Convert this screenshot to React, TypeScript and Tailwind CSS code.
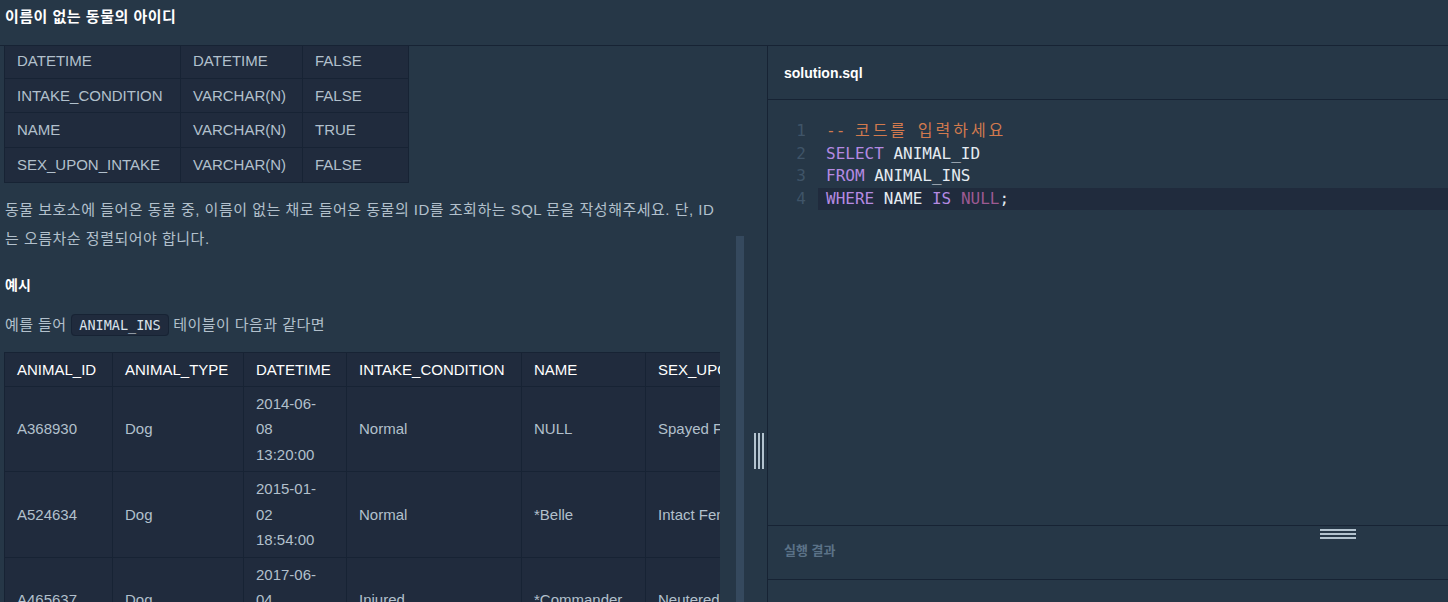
import React from "react";

const sans = "font-['Liberation_Sans','Noto_Sans_CJK_KR',sans-serif]";
const mono = "font-['DejaVu_Sans_Mono','Noto_Sans_CJK_KR',monospace]";

const columnRows = [
  ["DATETIME", "DATETIME", "FALSE"],
  ["INTAKE_CONDITION", "VARCHAR(N)", "FALSE"],
  ["NAME", "VARCHAR(N)", "TRUE"],
  ["SEX_UPON_INTAKE", "VARCHAR(N)", "FALSE"],
];

const exampleHead = ["ANIMAL_ID", "ANIMAL_TYPE", "DATETIME", "INTAKE_CONDITION", "NAME", "SEX_UPON_INTAKE"];
const exampleRows = [
  ["A368930", "Dog", "2014-06-08 13:20:00", "Normal", "NULL", "Spayed Female"],
  ["A524634", "Dog", "2015-01-02 18:54:00", "Normal", "*Belle", "Intact Female"],
  ["A465637", "Dog", "2017-06-04 08:17:00", "Injured", "*Commander", "Neutered Male"],
];
const colWidths = ["w-[108px]", "w-[131px]", "w-[103px]", "w-[175px]", "w-[124px]", "w-[160px]"];

function ProblemPanel() {
  return (
    <div className="w-[736px] shrink-0 overflow-hidden pl-[4px] pr-[16px]">
      {/* column spec table, scrolled slightly */}
      <table className="-mt-[3px] w-[405px] table-fixed border-collapse bg-[#202b3d] text-[15px] text-[#b2c0cc]">
        <tbody>
          {columnRows.map((r) => (
            <tr key={r[0]}>
              <td className="w-[176px] border border-[#172334] px-[12px] py-[5px] leading-[23.7px]">{r[0]}</td>
              <td className="w-[122px] border border-[#172334] px-[12px] py-[5px] leading-[23.7px]">{r[1]}</td>
              <td className="border border-[#172334] px-[12px] py-[5px] leading-[23.7px]">{r[2]}</td>
            </tr>
          ))}
        </tbody>
      </table>

      <p className="mt-[12px] pl-px text-[15px] leading-[29px] tracking-[0.5px] text-[#b2c0cc]">
        동물 보호소에 들어온 동물 중, 이름이 없는 채로 들어온 동물의 ID를 조회하는 SQL 문을 작성해주세요. 단, ID는 오름차순 정렬되어야 합니다.
      </p>

      <h5 className="mt-[18px] pl-px text-[14px] font-bold leading-[29px] text-white">예시</h5>

      <p className="mt-[10px] pl-px text-[15px] leading-[29px] tracking-[0.45px] text-[#b2c0cc]">
        예를 들어{" "}
        <code className={`${mono} rounded-[4px] border border-[#172334] bg-[#202b3d] px-[7px] py-[2px] text-[13.5px] tracking-normal text-[#dbe3ea]`}>
          ANIMAL_INS
        </code>{" "}
        테이블이 다음과 같다면
      </p>

      <div className="mt-[12px] w-[716px] overflow-hidden">
        <table className="w-[801px] table-fixed border-collapse bg-[#202b3d] text-[15px]">
          <thead>
            <tr>
              {exampleHead.map((h, i) => (
                <th
                  key={h}
                  className={`${colWidths[i]} border border-[#172334] px-[12px] py-[4px] text-left font-normal leading-[25px] whitespace-nowrap text-white`}
                >
                  {h}
                </th>
              ))}
            </tr>
          </thead>
          <tbody>
            {exampleRows.map((r) => (
              <tr key={r[0]}>
                {r.map((c, i) => (
                  <td
                    key={i}
                    className={`border border-[#172334] py-[4px] pl-[12px] align-middle leading-[25.5px] text-[#b2c0cc] ${
                      i === 2 ? "pr-[22px]" : "pr-[12px]"
                    }`}
                  >
                    {c}
                  </td>
                ))}
              </tr>
            ))}
          </tbody>
        </table>
      </div>
    </div>
  );
}

function CodeLine({ n, active, children }: { n: number; active?: boolean; children: React.ReactNode }) {
  return (
    <div className="flex h-[22.6px] items-center">
      <span className="w-[50px] shrink-0 pr-[12px] text-right text-[#3f5468]">{n}</span>
      <div className={`flex h-full flex-1 items-center px-[8px] ${active ? "bg-[#202b3d]" : ""}`}>{children}</div>
    </div>
  );
}

function EditorPanel() {
  return (
    <div className="flex flex-1 flex-col border-l border-[#172334]">
      <div className="flex h-[54px] items-center border-b border-[#172334] pt-[2px] pl-[16px] text-[14px] font-bold text-white">
        solution.sql
      </div>

      <div className={`${mono} h-[426px] border-b border-[#172334] pt-[20px] text-[16px]`}>
        <CodeLine n={1}>
          <span className="whitespace-pre text-[#d27a4e]">
            -- <span className="tracking-[3px]">코드를</span> <span className="tracking-[3px]">입력하세요</span>
          </span>
        </CodeLine>
        <CodeLine n={2}>
          <span className="whitespace-pre">
            <span className="text-[#b58ae2]">SELECT</span> <span className="text-[#e4ebf1]">ANIMAL_ID</span>
          </span>
        </CodeLine>
        <CodeLine n={3}>
          <span className="whitespace-pre">
            <span className="text-[#b58ae2]">FROM</span> <span className="text-[#e4ebf1]">ANIMAL_INS</span>
          </span>
        </CodeLine>
        <CodeLine n={4} active>
          <span className="whitespace-pre">
            <span className="text-[#b58ae2]">WHERE</span> <span className="text-[#e4ebf1]">NAME</span>{" "}
            <span className="text-[#b58ae2]">IS</span> <span className="text-[#9d5a92]">NULL</span>
            <span className="text-[#e4ebf1]">;</span>
          </span>
        </CodeLine>
      </div>

      <div className="relative flex h-[54px] items-center border-b border-[#172334] pb-[4px] pl-[16px] text-[13px] font-bold text-[#5b7287]">
        실행 결과
        {/* vertical resize grip */}
        <div className="absolute top-[3px] right-[92px] flex flex-col gap-[2px]">
          <span className="h-[2px] w-[36px] bg-[#b3c3cf]" />
          <span className="h-[2px] w-[36px] bg-[#b3c3cf]" />
          <span className="h-[2px] w-[36px] bg-[#b3c3cf]" />
        </div>
      </div>
    </div>
  );
}

export default function App() {
  return (
    <div className={`${sans} flex h-[602px] w-[1448px] flex-col overflow-hidden bg-[#263747] [font-feature-settings:'palt']`}>
      <div className="h-[46px] shrink-0 border-b border-[#172334] pl-[5px] pt-[6px] text-[15px] font-bold leading-[22px] tracking-[0.5px] text-white">
        이름이 없는 동물의 아이디
      </div>

      <div className="flex min-h-0 flex-1">
        <ProblemPanel />

        {/* scrollbar */}
        <div className="w-[8px] shrink-0 pt-[190px]">
          <div className="h-full bg-[#35495e]" />
        </div>

        {/* horizontal resize gutter */}
        <div className="w-[23px] shrink-0 pl-[10px] pt-[387px]">
          <div className="flex gap-[2px]">
            <span className="h-[36px] w-[2px] bg-[#b3c3cf]" />
            <span className="h-[36px] w-[2px] bg-[#b3c3cf]" />
            <span className="h-[36px] w-[2px] bg-[#b3c3cf]" />
          </div>
        </div>

        <EditorPanel />
      </div>
    </div>
  );
}
